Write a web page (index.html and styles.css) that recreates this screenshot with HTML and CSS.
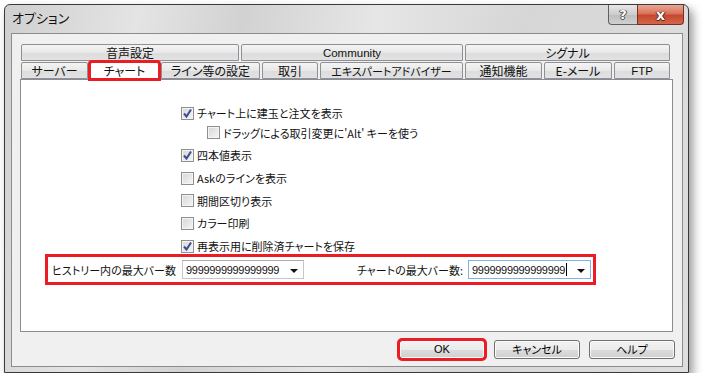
FILE: index.html
```html
<!DOCTYPE html>
<html lang="ja">
<head>
  <meta charset="UTF-8" />
  <title>オプション</title>
  <link rel="stylesheet" href="styles.css">
</head>
<body>
  <div class="window">
    <div class="titlebar">
      <span class="title">オプション</span>
      <div class="caption-buttons">
        <span class="cap-btn help">?</span>
        <span class="cap-btn close">x</span>
      </div>
    </div>

    <div class="client">
      <div class="tabs">
        <div class="tab-row">
          <span class="tab t-sound">音声設定</span>
          <span class="tab t-community">Community</span>
          <span class="tab t-signal">シグナル</span>
        </div>
        <div class="tab-row">
          <span class="tab t-server">サーバー</span>
          <span class="tab t-chart selected">チャート</span>
          <span class="tab t-line">ライン等の設定</span>
          <span class="tab t-trade">取引</span>
          <span class="tab t-expert">エキスパートアドバイザー</span>
          <span class="tab t-notify">通知機能</span>
          <span class="tab t-mail">E-メール</span>
          <span class="tab t-ftp">FTP</span>
        </div>
      </div>

      <div class="page">
        <div class="checks">
          <div class="check"><span class="box on"><svg viewBox="0 0 11 11"><path d="M2 5.5 L4.5 8.5 L9 1.5" /></svg></span>チャート上に建玉と注文を表示</div>
          <div class="check sub"><span class="box"></span>ドラッグによる取引変更に'Alt' キーを使う</div>
          <div class="check"><span class="box on"><svg viewBox="0 0 11 11"><path d="M2 5.5 L4.5 8.5 L9 1.5" /></svg></span>四本値表示</div>
          <div class="check"><span class="box"></span>Askのラインを表示</div>
          <div class="check"><span class="box"></span>期間区切り表示</div>
          <div class="check"><span class="box"></span>カラー印刷</div>
          <div class="check"><span class="box on"><svg viewBox="0 0 11 11"><path d="M2 5.5 L4.5 8.5 L9 1.5" /></svg></span>再表示用に削除済チャートを保存</div>
        </div>

        <div class="bars">
          <span class="bars-label">ヒストリー内の最大バー数</span>
          <div class="combo">
            <span class="combo-value">9999999999999999</span>
            <span class="arrow"></span>
          </div>
          <span class="spacer"></span>
          <span class="bars-label2">チャートの最大バー数:</span>
          <div class="combo focused">
            <span class="combo-value">9999999999999999<span class="caret"></span></span>
            <span class="arrow"></span>
          </div>
        </div>
      </div>

      <div class="buttons">
        <button class="btn ok">OK</button>
        <button class="btn">キャンセル</button>
        <button class="btn">ヘルプ</button>
      </div>
    </div>
  </div>
</body>
</html>
```

FILE: styles.css
```css
body {
  margin: 0;
  background: #fff;
  font-family: "Noto Sans CJK JP", "Liberation Sans", sans-serif;
  font-size: 11px;
  font-feature-settings: "palt";
  color: #111;
}
.window {
  box-sizing: border-box;
  width: 685px;
  height: 369px;
  margin: 4px 0 0 4px;
  border: 1px solid #3a3a3a;
  border-radius: 6px 6px 0 0;
  background: linear-gradient(100deg, #cfcfcf 0%, #e4e4e4 18%, #d2d2d2 32%, #e6e6e6 50%, #d6d6d6 70%, #dedede 100%);
  box-shadow: 4px 5px 10px rgba(0,0,0,0.4);
}
.titlebar {
  height: 28px;
  display: flex;
  justify-content: space-between;
  align-items: flex-start;
}
.title {
  margin: 5px 0 0 7px;
  font-size: 13px;
  line-height: 16px;
  color: #111;
}
.caption-buttons {
  display: flex;
  margin-right: 4px;
}
.cap-btn {
  box-sizing: border-box;
  height: 20px;
  display: flex;
  align-items: center;
  justify-content: center;
  font-family: "DejaVu Sans", sans-serif;
  font-weight: bold;
  color: #fff;
  border: 1px solid #5f5f5f;
  border-top: none;
}
.help {
  width: 29px;
  border-radius: 0 0 0 4px;
  border-right: none;
  background: linear-gradient(#e6e6e6, #cdcdcd 50%, #bdbdbd 51%, #d0d0d0);
  font-size: 13px;
  text-shadow: 0 0 1px #333, 1px 0 0 #555, -1px 0 0 #555, 0 1px 0 #555;
}
.close {
  width: 47px;
  border-radius: 0 0 4px 0;
  border-color: #7a2f22;
  background: linear-gradient(#e9a895, #d86f57 48%, #c4462d 52%, #d3664b);
  font-size: 14px;
  text-shadow: 0 0 1px #333, 1px 0 0 #6a2014, -1px 0 0 #6a2014, 0 1px 0 #6a2014;
}
.client {
  box-sizing: border-box;
  width: 672px;
  height: 334px;
  margin-left: 6px;
  border: 1px solid #8c8c8c;
  background: #f0f0f0;
  padding: 10px 0 0 8px;
}
.tabs {
  width: 649px;
  margin-left: 1px;
}
.tab-row {
  display: flex;
  gap: 2px;
  margin-bottom: 1px;
}
.tab {
  box-sizing: border-box;
  height: 17px;
  display: flex;
  align-items: center;
  justify-content: center;
  border: 1px solid #8e9095;
  border-radius: 2px 2px 0 0;
  background: linear-gradient(#f4f4f4, #e8e8e8 50%, #dcdcdc 51%, #e2e2e2);
  font-size: 12px;
  line-height: 14px;
  white-space: nowrap;
}
.t-sound { width: 218px; }
.t-community { width: 222px; font-family: "Liberation Sans", sans-serif; font-size: 11.5px; }
.t-signal { width: 205px; }
.t-server { width: 67px; }
.t-chart { width: 69px; }
.t-line { width: 99px; }
.t-trade { width: 56px; }
.t-expert { width: 143px; font-size: 11px; }
.t-notify { width: 77px; }
.t-mail { width: 68px; }
.t-ftp { width: 56px; font-family: "Liberation Sans", sans-serif; font-size: 11.5px; }
.tab.selected {
  position: relative;
  z-index: 1;
  background: #fff;
  border-bottom-color: #fff;
  outline: 3px solid #ec1c24;
  outline-offset: -1px;
}
.page {
  box-sizing: border-box;
  width: 653px;
  height: 253px;
  margin-top: -1px;
  border: 1px solid #898c95;
  background: #fff;
}
.checks {
  display: flex;
  flex-direction: column;
  gap: 8.7px;
  padding: 26px 0 0 160px;
}
.check {
  display: flex;
  align-items: center;
  height: 14px;
  line-height: 14px;
  white-space: nowrap;
}
.check.sub {
  margin: -3px 0 0 26px;
}
.box {
  box-sizing: border-box;
  width: 13px;
  height: 13px;
  margin-right: 3px;
  border: 1px solid #8f8f8f;
  background: linear-gradient(135deg, #d6d6d6, #f6f6f6);
  box-shadow: inset 0 0 0 1px #f4f4f4;
  flex-shrink: 0;
  display: flex;
}
.box svg {
  width: 11px;
  height: 11px;
}
.box path {
  fill: none;
  stroke: #3a4f8f;
  stroke-width: 2;
}
.bars {
  box-sizing: border-box;
  display: flex;
  align-items: center;
  width: 551px;
  height: 31px;
  margin: 1px 0 0 24px;
  padding: 0 2px 0 4px;
  border: 3px solid #ec1c24;
}
.bars-label {
  width: 130px;
  white-space: nowrap;
}
.spacer {
  flex: 1;
}
.bars-label2 {
  margin-right: 5px;
  white-space: nowrap;
}
.combo {
  box-sizing: border-box;
  width: 122px;
  height: 19px;
  display: flex;
  align-items: center;
  justify-content: space-between;
  padding: 0 5px 0 3px;
  border: 1px solid #c5c7cc;
  border-top-color: #abadb3;
  background: #fff;
}
.combo.focused {
  width: 123px;
  border-color: #7fb4e6;
}
.combo-value {
  display: flex;
  align-items: center;
  font-family: "Liberation Sans", sans-serif;
  font-size: 11px;
  letter-spacing: -0.3px;
}
.caret {
  width: 1px;
  height: 13px;
  margin-left: 1px;
  background: #000;
}
.arrow {
  width: 0;
  height: 0;
  margin-top: 2px;
  border-left: 4px solid transparent;
  border-right: 4px solid transparent;
  border-top: 4px solid #111;
}
.buttons {
  display: flex;
  justify-content: flex-end;
  gap: 9px;
  width: 655px;
  margin-top: 8px;
}
.btn {
  box-sizing: border-box;
  width: 86px;
  height: 19px;
  padding: 0;
  font: inherit;
  line-height: 15px;
  color: #000;
  border: 1px solid #707070;
  border-radius: 3px;
  background: linear-gradient(#f2f2f2, #ebebeb 50%, #dddddd 51%, #cfcfcf);
  box-shadow: inset 0 0 0 1px #fbfbfb;
}
.btn.ok {
  font-family: "Liberation Sans", sans-serif;
  border-color: #3c7fb1;
  outline: 3px solid #ec1c24;
  outline-offset: -1px;
}
```
